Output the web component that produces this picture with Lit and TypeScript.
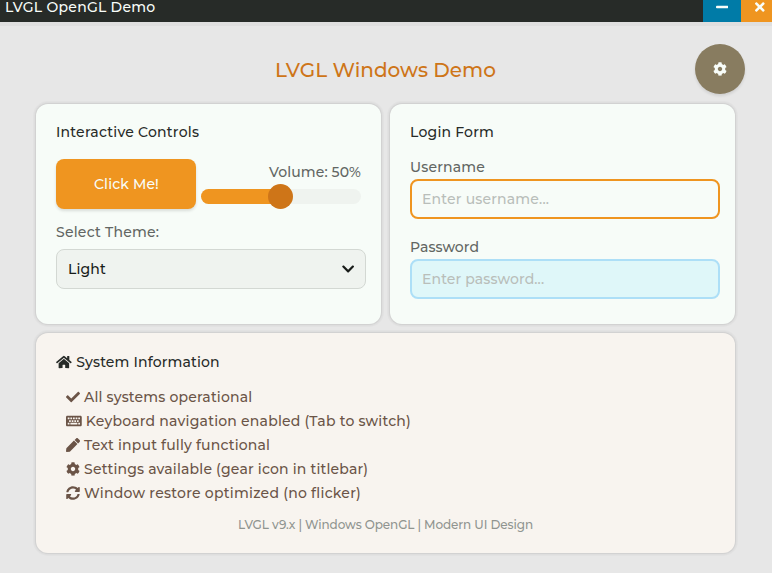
import { LitElement, html, svg, css } from "lit";
import { customElement, property } from "lit/decorators.js";

const ICONS: Record<string, [number, string]> = {
  check: [512, "M173.898 439.404l-166.4-166.4c-9.997-9.997-9.997-26.206 0-36.204l36.203-36.204c9.997-9.998 26.207-9.998 36.204 0L192 312.69 432.095 72.596c9.997-9.997 26.207-9.997 36.204 0l36.203 36.204c9.997 9.997 9.997 26.206 0 36.204l-294.4 294.401c-9.998 9.997-26.207 9.997-36.204-.001z"],
  gear: [512, "M487.4 315.7l-42.6-24.6c4.3-23.2 4.3-47 0-70.2l42.6-24.6c4.9-2.8 7.1-8.6 5.5-14-11.1-35.6-30-67.8-54.7-94.6-3.8-4.1-10-5.1-14.8-2.3L380.8 110c-17.9-15.4-38.5-27.3-60.8-35.1V25.8c0-5.6-3.9-10.5-9.4-11.7-36.7-8.2-74.3-7.8-109.2 0-5.5 1.2-9.4 6.1-9.4 11.7V75c-22.2 7.9-42.8 19.8-60.8 35.1L88.7 85.5c-4.9-2.8-11-1.9-14.8 2.3-24.7 26.7-43.6 58.9-54.7 94.6-1.7 5.4.6 11.2 5.5 14L67.3 221c-4.3 23.2-4.3 47 0 70.2l-42.6 24.6c-4.9 2.8-7.1 8.6-5.5 14 11.1 35.6 30 67.8 54.7 94.6 3.8 4.1 10 5.1 14.8 2.3l42.6-24.6c17.9 15.4 38.5 27.3 60.8 35.1v49.2c0 5.6 3.9 10.5 9.4 11.7 36.7 8.2 74.3 7.8 109.2 0 5.5-1.2 9.4-6.1 9.4-11.7v-49.2c22.2-7.9 42.8-19.8 60.8-35.1l42.6 24.6c4.9 2.8 11 1.9 14.8-2.3 24.7-26.7 43.6-58.9 54.7-94.6 1.5-5.5-.7-11.3-5.6-14.1zM256 336c-44.1 0-80-35.9-80-80s35.9-80 80-80 80 35.9 80 80-35.9 80-80 80z"],
  home: [576, "M280.37 148.26L96 300.11V464a16 16 0 0 0 16 16l112.06-.29a16 16 0 0 0 15.92-16V368a16 16 0 0 1 16-16h64a16 16 0 0 1 16 16v95.64a16 16 0 0 0 16 16.05L464 480a16 16 0 0 0 16-16V300L295.67 148.26a12.19 12.19 0 0 0-15.3 0zM571.6 251.47L488 182.56V44.05a12 12 0 0 0-12-12h-56a12 12 0 0 0-12 12v72.61L318.47 43a48 48 0 0 0-61 0L4.34 251.47a12 12 0 0 0-1.6 16.9l25.5 31A12 12 0 0 0 45.15 301l235.22-193.74a12.19 12.19 0 0 1 15.3 0L530.9 301a12 12 0 0 0 16.9-1.6l25.5-31a12 12 0 0 0-1.7-16.93z"],
  keyboard: [576, "M528 448H48c-26.5 0-48-21.5-48-48V112c0-26.5 21.5-48 48-48h480c26.500 0 48 21.500 48 48v288c0 26.500-21.500 48-48 48zM128 180v-40c0-6.600-5.400-12-12-12H76c-6.600 0-12 5.400-12 12v40c0 6.600 5.400 12 12 12h40c6.600 0 12-5.400 12-12zm96 0v-40c0-6.600-5.400-12-12-12h-40c-6.600 0-12 5.400-12 12v40c0 6.600 5.400 12 12 12h40c6.600 0 12-5.400 12-12zm96 0v-40c0-6.600-5.400-12-12-12h-40c-6.600 0-12 5.400-12 12v40c0 6.600 5.400 12 12 12h40c6.600 0 12-5.400 12-12zm96 0v-40c0-6.600-5.400-12-12-12h-40c-6.600 0-12 5.400-12 12v40c0 6.600 5.400 12 12 12h40c6.600 0 12-5.400 12-12zm96 0v-40c0-6.600-5.400-12-12-12h-40c-6.600 0-12 5.400-12 12v40c0 6.600 5.400 12 12 12h40c6.600 0 12-5.400 12-12zm-336 96v-40c0-6.600-5.400-12-12-12h-40c-6.600 0-12 5.400-12 12v40c0 6.600 5.400 12 12 12h40c6.600 0 12-5.400 12-12zm96 0v-40c0-6.600-5.400-12-12-12h-40c-6.600 0-12 5.400-12 12v40c0 6.600 5.400 12 12 12h40c6.600 0 12-5.400 12-12zm96 0v-40c0-6.600-5.400-12-12-12h-40c-6.600 0-12 5.400-12 12v40c0 6.600 5.400 12 12 12h40c6.600 0 12-5.400 12-12zm96 0v-40c0-6.600-5.400-12-12-12h-40c-6.600 0-12 5.400-12 12v40c0 6.600 5.400 12 12 12h40c6.600 0 12-5.400 12-12zM128 372v-40c0-6.600-5.400-12-12-12H76c-6.600 0-12 5.400-12 12v40c0 6.600 5.400 12 12 12h40c6.600 0 12-5.400 12-12zm288 0v-40c0-6.600-5.400-12-12-12H172c-6.600 0-12 5.400-12 12v40c0 6.600 5.400 12 12 12h232c6.600 0 12-5.400 12-12zm96 0v-40c0-6.600-5.400-12-12-12h-40c-6.600 0-12 5.400-12 12v40c0 6.600 5.400 12 12 12h40c6.600 0 12-5.400 12-12z"],
  pen: [512, "M290.74 93.24l128.02 128.02-277.99 277.99-114.14 12.6C11.35 513.54-1.56 500.62.14 485.34l12.7-114.22 277.9-277.88zm207.2-19.06l-60.11-60.11c-18.75-18.75-49.16-18.75-67.91 0l-56.55 56.55 128.02 128.02 56.55-56.55c18.75-18.76 18.75-49.16 0-67.91z"],
  sync: [512, "M370.72 133.28C339.458 104.008 298.888 87.962 255.848 88c-77.458.068-144.328 53.178-162.791 126.85-1.344 5.363-6.122 9.15-11.651 9.15H24.103c-7.498 0-13.194-6.807-11.807-14.176C33.933 94.924 134.813 8 256 8c66.448 0 126.791 26.136 171.315 68.685L463.03 40.97C478.149 25.851 504 36.559 504 57.941V192c0 13.255-10.745 24-24 24H345.941c-21.382 0-32.09-25.851-16.971-40.971l41.75-41.749zM32 296h134.059c21.382 0 32.09 25.851 16.971 40.971l-41.750 41.750c31.262 29.273 71.835 45.319 114.876 45.280 77.418-.070 144.315-53.144 162.787-126.849 1.344-5.363 6.122-9.150 11.651-9.150h57.304c7.498 0 13.194 6.807 11.807 14.176C478.067 417.076 377.187 504 256 504c-66.448 0-126.791-26.136-171.315-68.685L48.970 471.030C33.851 486.149 8 475.441 8 454.059V320c0-13.255 10.745-24 24-24z"],
  chevron: [448, "M207.029 381.476L12.686 187.132c-9.373-9.373-9.373-24.569 0-33.941l22.667-22.667c9.357-9.357 24.522-9.375 33.901-.040L224 284.505l154.745-154.021c9.379-9.335 24.544-9.317 33.901.040l22.667 22.667c9.373 9.373 9.373 24.569 0 33.941L240.971 381.476c-9.373 9.372-24.569 9.372-33.942 0z"],
  minus: [448, "M416 208H32c-17.670 0-32 14.330-32 32v32c0 17.670 14.330 32 32 32h384c17.670 0 32-14.330 32-32v-32c0-17.670-14.330-32-32-32z"],
  times: [352, "M242.720 256l100.070-100.070c12.280-12.280 12.280-32.190 0-44.480l-22.240-22.240c-12.280-12.280-32.190-12.280-44.480 0L176 189.280 75.930 89.210c-12.280-12.280-32.190-12.280-44.480 0L9.210 111.450c-12.280 12.280-12.280 32.190 0 44.480L109.280 256 9.210 356.070c-12.280 12.280-12.280 32.190 0 44.480l22.240 22.240c12.280 12.280 32.200 12.280 44.480 0L176 322.720l100.070 100.070c12.280 12.280 32.200 12.280 44.480 0l22.240-22.240c12.280-12.280 12.280-32.190 0-44.480L242.720 256z"],
};

@customElement("ui-icon")
class UiIcon extends LitElement {
  @property() name = "check";
  @property({ type: Number }) size = 14;
  static styles = css`
    :host { display: block; flex: none; }
    svg { display: block; fill: currentColor; }
  `;
  render() {
    const [w, d] = ICONS[this.name];
    return html`<svg width=${(this.size * w) / 512} height=${this.size} viewBox="0 0 ${w} 512">${svg`<path d=${d}></path>`}</svg>`;
  }
}

/* A single line of text tracked so that it fills the given width. */
@customElement("ui-text")
class UiText extends LitElement {
  @property() text = "";
  @property({ type: Number }) width = 100;
  static styles = css`
    :host { display: block; flex: none; white-space: pre; }
    span { display: inline-block; }
  `;
  render() {
    return html`<span>${this.text}</span>`;
  }
  updated() {
    const el = this.renderRoot.querySelector("span") as HTMLElement;
    el.style.letterSpacing = "0px";
    const gap = this.width - el.getBoundingClientRect().width;
    el.style.letterSpacing = `${gap / this.text.length}px`;
  }
}

const t = (text: string, width: number) => html`<ui-text .text=${text} .width=${width}></ui-text>`;
const icon = (name: string, size = 14) => html`<ui-icon .name=${name} .size=${size}></ui-icon>`;

const STATUS: [string, string, number][] = [
  ["check", "All systems operational", 168.4],
  ["keyboard", "Keyboard navigation enabled (Tab to switch)", 325.2],
  ["pen", "Text input fully functional", 186.2],
  ["gear", "Settings available (gear icon in titlebar)", 284.2],
  ["sync", "Window restore optimized (no flicker)", 277],
];

@customElement("app-root")
class AppRoot extends LitElement {
  static styles = css`
    :host {
      display: flex; flex-direction: column; position: relative; box-sizing: border-box;
      width: 772px; height: 573px; overflow: hidden; background: #e7e7e7;
      font: 500 14px/18px Montserrat, Inter, sans-serif; color: #272b28;
    }
    * { box-sizing: border-box; }
    .titlebar {
      flex: none; height: 22px; display: flex; background: #272b28; color: #f8fdf9;
      box-shadow: 0 4px 0 #dfdfdf;
    }
    .caption { flex: 1; padding: 0 0 0 5px; margin-top: -2px; }
    .win { height: 22px; display: flex; justify-content: center; }
    .min { width: 38px; background: #007ba7; }
    .close { width: 38px; margin-right: -7px; background: #ef9520; }
    .title { display: flex; justify-content: center; margin: 35px 1px 0 0; font-size: 20px; line-height: 26px; color: #ce7518; }
    .fab {
      position: absolute; left: 695px; top: 44px; width: 50px; height: 50px; border-radius: 50%;
      display: flex; align-items: center; justify-content: center;
      background: #887c60; color: #f8fdf9; box-shadow: 0 2px 3px rgba(0, 0, 0, 0.1);
    }
    .grid { display: grid; grid-template-columns: 345px 345px; gap: 9px; margin: 21px 0 0 36px; }
    .card {
      height: 220px; border-radius: 12px; background: #f7fcf8; padding: 19px 15px 0 20px;
      box-shadow: 0 0 0 1px #d2d2d2, 0 0 0 2px #dedede, 0 0 0 3px #e2e2e2;
    }
    .info { grid-column: span 2; height: 220px; padding-top: 20px; background: #f8f4ef; }
    .row { display: flex; }
    .controls { margin-top: 18px; gap: 5px; }
    .btn {
      width: 140px; height: 50px; border-radius: 8px; background: #ef9520; color: #f8fdf9; padding-left: 1px;
      display: flex; align-items: center; justify-content: center; box-shadow: 0 2px 3px rgba(0, 0, 0, 0.12);
    }
    .volume { width: 160px; padding-top: 4px; display: flex; flex-direction: column; align-items: flex-end; color: #626663; }
    .track { width: 160px; height: 15px; margin-top: 8px; border-radius: 8px; background: #eff3ef; display: flex; align-items: center; }
    .fill { height: 15px; border-radius: 8px 0 0 8px; background: #ef9520; }
    .knob { width: 25px; height: 25px; margin-left: -13px; border-radius: 50%; background: #ce7518; flex: none; }
    .label { color: #626663; }
    .theme { margin-top: 14px; }
    .select {
      width: 310px; height: 40px; margin-top: 8px; padding: 0 11px; border: 1px solid #d3d8d3; border-radius: 8px;
      background: #eff3ef; color: #181c19; display: flex; align-items: center; justify-content: space-between;
    }
    .user { margin-top: 17px; }
    .pass { margin-top: 19px; }
    .field {
      width: 310px; height: 40px; margin-top: 3px; padding: 0 10px; border: 2px solid #ef9520; border-radius: 8px;
      display: flex; align-items: center; color: #b9beba;
    }
    .cool { border-color: #addff7; background: #dff7f9; }
    .heading { gap: 4.5px; align-items: center; }
    .list { margin: 14px 0 0 10px; color: #6b5447; }
    .item { display: flex; align-items: center; gap: 4px; height: 24px; }
    .footer { display: flex; justify-content: center; margin: 13px 5px 0 0; font-size: 12px; line-height: 14px; color: #909490; }
  `;
  render() {
    const volume = 50;
    return html`
      <div class="titlebar">
        <div class="caption">${t("LVGL OpenGL Demo", 150.5)}</div>
        <div class="win min">${icon("minus")}</div>
        <div class="win close">${icon("times")}</div>
      </div>
      <div class="title">${t("LVGL Windows Demo", 221)}</div>
      <div class="fab">${icon("gear")}</div>
      <div class="grid">
        <section class="card">
          ${t("Interactive Controls", 143.2)}
          <div class="row controls">
            <div class="btn">${t("Click Me!", 65)}</div>
            <div class="volume">
              ${t(`Volume: ${volume}%`, 92)}
              <div class="track"><div class="fill" style="width:${volume}%"></div><div class="knob"></div></div>
            </div>
          </div>
          <div class="label theme">${t("Select Theme:", 103.2)}</div>
          <div class="select">${t("Light", 38)}${icon("chevron")}</div>
        </section>
        <section class="card">
          ${t("Login Form", 84)}
          <div class="label user">${t("Username", 75)}</div>
          <div class="field">${t("Enter username...", 127.2)}</div>
          <div class="label pass">${t("Password", 69)}</div>
          <div class="field cool">${t("Enter password...", 122.2)}</div>
        </section>
        <section class="card info">
          <div class="row heading">${icon("home")}${t("System Information", 143.5)}</div>
          <div class="list">
            ${STATUS.map(([name, text, w]) => html`<div class="item">${icon(name)}${t(text, w)}</div>`)}
          </div>
          <div class="footer">${t("LVGL v9.x | Windows OpenGL | Modern UI Design", 295)}</div>
        </section>
      </div>
    `;
  }
}
